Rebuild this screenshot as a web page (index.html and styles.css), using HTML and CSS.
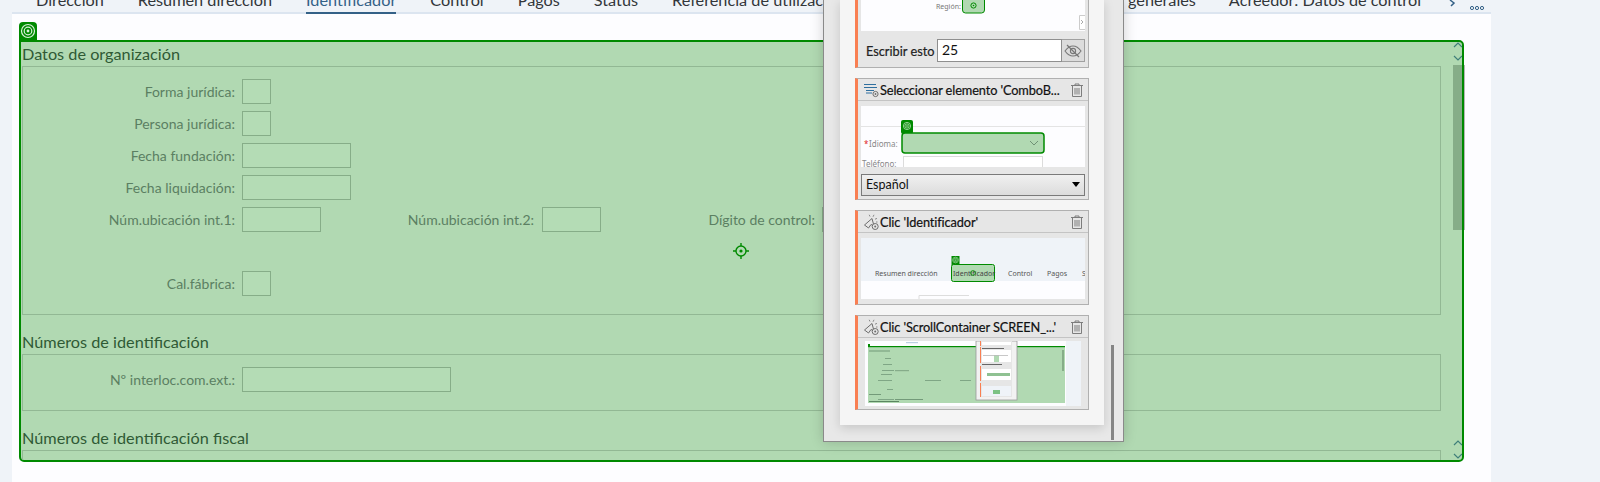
FILE: index.html
```html
<!DOCTYPE html>
<html lang="es">
<head>
	<meta charset="UTF-8">
	<title>Identificador</title>
	<link rel="stylesheet" href="styles.css">
</head>
<body>
	<svg class="defs" width="0" height="0">
		<symbol id="target-ring" viewBox="0 0 18 18">
			<circle cx="9" cy="9" r="6.5" fill="none" stroke="#d9f0d9" stroke-width="1.2"/>
			<circle cx="9" cy="9" r="3.8" fill="none" stroke="#d9f0d9" stroke-width="1.2"/>
			<circle cx="9" cy="9" r="1.4" fill="#d9f0d9"/>
		</symbol>
		<symbol id="trash" viewBox="0 0 14 14">
			<path d="M1 2.5h12M5 2.5V1h4v1.5M2.5 2.5v11h9v-11M5 5v6.5M7 5v6.5M9 5v6.5" fill="none" stroke="#7d7d7d" stroke-width="1"/>
		</symbol>
		<symbol id="click" viewBox="0 0 16 16">
			<path d="M1.5 11 9 4.5l2 7.5-3-1.5-2.5 3.5z" fill="none" stroke="#6d6d6d" stroke-width="1"/>
			<path d="M7 2.5 6.2.8M10 2.8 11 .8M12 5.2l2-.8M13 8h1.5" stroke="#8a8a8a" stroke-width="1"/>
			<circle cx="12.2" cy="12.5" r="3" fill="#e6e6e6" stroke="#6d6d6d"/>
			<circle cx="12.2" cy="12.5" r="1" fill="#6d6d6d"/>
		</symbol>
	</svg>

	<div class="panel">
		<div class="tabs">
			<span class="tab">Dirección</span>
			<span class="tab">Resumen dirección</span>
			<span class="tab active">Identificador</span>
			<span class="tab">Control</span>
			<span class="tab">Pagos</span>
			<span class="tab">Status</span>
			<span class="tab">Referencia de utilización</span>
			<div class="tabs-end">
				<span class="tab">Datos generales</span>
				<span class="tab">Acreedor: Datos de control</span>
				<svg class="tab-more" width="48" height="12" viewBox="0 0 48 12">
					<path d="M7 0 11 3 8 6" fill="none" stroke="#346187" stroke-width="1.5"/>
					<circle cx="29" cy="8" r="1.6" fill="none" stroke="#346187"/>
					<circle cx="34" cy="8" r="1.6" fill="none" stroke="#346187"/>
					<circle cx="39" cy="8" r="1.6" fill="none" stroke="#346187"/>
				</svg>
			</div>
		</div>

		<div class="tag"><svg width="18" height="18"><use href="#target-ring"/></svg></div>
		<div class="scroll-area">
			<h3 class="group-title first">Datos de organización</h3>
			<div class="group group-org">
				<div class="row"><label>Forma jurídica:</label><span class="inp w-s"></span></div>
				<div class="row"><label>Persona jurídica:</label><span class="inp w-s"></span></div>
				<div class="row"><label>Fecha fundación:</label><span class="inp w-m"></span></div>
				<div class="row"><label>Fecha liquidación:</label><span class="inp w-m"></span></div>
				<div class="row">
					<label>Núm.ubicación int.1:</label><span class="inp w-u1"></span>
					<label class="lbl-2">Núm.ubicación int.2:</label><span class="inp w-u2"></span>
					<label class="lbl-3">Dígito de control:</label><span class="inp w-u2"></span>
				</div>
				<div class="row row-cal"><label>Cal.fábrica:</label><span class="inp w-s"></span></div>
			</div>
			<h3 class="group-title">Números de identificación</h3>
			<div class="group group-num">
				<div class="row"><label>Nº interloc.com.ext.:</label><span class="inp w-l"></span></div>
			</div>
			<h3 class="group-title">Números de identificación fiscal</h3>
			<div class="group group-fiscal"></div>

			<svg class="crosshair" width="16" height="16" viewBox="0 0 16 16">
				<circle cx="8" cy="8" r="5" fill="none" stroke="#008a00" stroke-width="1.4"/>
				<circle cx="8" cy="8" r="1.6" fill="#008a00"/>
				<path d="M8 0v3M8 13v3M0 8h3M13 8h3" stroke="#008a00" stroke-width="1.4"/>
			</svg>

			<div class="sb">
				<svg class="sb-arrows top" width="12" height="22" viewBox="0 0 12 22">
					<path d="M2 6 6 2l4 4M2 15l4 4 4-4" fill="none" stroke="#3f7f7a" stroke-width="1.2"/>
				</svg>
				<div class="sb-thumb"></div>
				<svg class="sb-arrows bottom" width="12" height="22" viewBox="0 0 12 22">
					<path d="M2 6 6 2l4 4M2 15l4 4 4-4" fill="none" stroke="#3f7f7a" stroke-width="1.2"/>
				</svg>
			</div>
		</div>
	</div>
	<div class="sb-edge"></div>

	<div class="popup">
		<div class="popup-list">
			<div class="card">
				<svg class="shot" width="224" height="41" viewBox="0 -10 224 41">
					<rect x="0" y="-10" width="224" height="41" fill="#fdfdff"/>
					<text class="mini mini-s" x="75" y="8.500" fill="#777">Región:</text>
					<rect x="101.5" y="-10" width="22" height="23" rx="3" fill="#b1d9b2" stroke="#008a00"/>
					<circle cx="112.5" cy="5.5" r="2.6" fill="none" stroke="#008a00"/>
					<circle cx="112.5" cy="5.5" r=".8" fill="#008a00"/>
					<path d="M224 15.5h-5.5v14h5.500" fill="#fff" stroke="#ccc"/>
					<path d="M220 20l2 2-2 2" fill="none" stroke="#aaa"/>
				</svg>
				<div class="write-row">
					<span class="write-label">Escribir esto</span>
					<span class="write-input">25</span>
					<span class="write-eye">
						<svg width="18" height="14" viewBox="0 0 18 14">
							<path d="M1 7c2.500-3.500 5-5 8-5s5.500 1.500 8 5c-2.500 3.500-5 5-8 5s-5.500-1.500-8-5z" fill="none" stroke="#777" stroke-width="1.1"/>
							<circle cx="9" cy="7" r="2.600" fill="none" stroke="#777" stroke-width="1.100"/>
							<path d="M3 1l12 12" stroke="#777" stroke-width="1.200"/>
						</svg>
					</span>
				</div>
			</div>

			<div class="card card-combo">
				<div class="card-head">
					<svg class="card-icon" width="16" height="16" viewBox="0 0 16 16">
						<path d="M1 2.500h12M1 5.500h13M3 8.500h8M3 11h6" stroke="#2f6f9f" stroke-width="1.200"/>
						<circle cx="12.500" cy="12" r="2.600" fill="#e6e6e6" stroke="#6d6d6d"/>
						<circle cx="12.500" cy="12" r=".9" fill="#6d6d6d"/>
					</svg>
					<span class="card-title">Seleccionar elemento 'ComboB...</span>
					<svg class="card-trash" width="14" height="14"><use href="#trash"/></svg>
				</div>
				<svg class="shot" width="224" height="61" viewBox="0 0 224 61">
					<rect width="224" height="61" fill="#fdfdff"/>
					<path d="M0 20.500h224" stroke="#e4e4e4"/>
					<rect x="42.500" y="50.500" width="139" height="14" fill="#fff" stroke="#dcdcdc"/>
					<rect x="40" y="14" width="12" height="14" rx="2" fill="#008a00"/>
					<use href="#target-ring" x="41" y="15" width="10" height="10"/>
					<rect x="41" y="27" width="142" height="20" rx="3" fill="#b1d9b2" stroke="#008a00" stroke-width="1.500"/>
					<path d="M169 35l4 4 4-4" fill="none" stroke="#6f9275"/>
					<text class="mini" x="3" y="41" fill="#d22">*</text>
					<text class="mini" x="8" y="41" fill="#888">Idioma:</text>
					<text class="mini" x="1" y="61" fill="#888">Teléfono:</text>
				</svg>
				<div class="combo">Español</div>
			</div>

			<div class="card">
				<div class="card-head">
					<svg class="card-icon" width="16" height="16"><use href="#click"/></svg>
					<span class="card-title">Clic 'Identificador'</span>
					<svg class="card-trash" width="14" height="14"><use href="#trash"/></svg>
				</div>
				<svg class="shot" width="224" height="61" viewBox="0 0 224 61">
					<rect width="224" height="61" fill="#fdfdff"/>
					<rect width="224" height="43" fill="#eff3f8"/>
					<text class="mini mini-s" x="14" y="38" fill="#555">Resumen dirección</text>
					<rect x="90.500" y="18" width="8" height="9" fill="#008a00"/>
					<use href="#target-ring" x="90.500" y="18" width="8" height="8"/>
					<rect x="90.500" y="26.500" width="43" height="17" rx="2" fill="#b1d9b2" stroke="#008a00"/>
					<text class="mini mini-s" x="92" y="38" fill="#444">Identificador</text>
					<circle cx="112" cy="35" r="2.400" fill="none" stroke="#008a00" stroke-width=".8"/>
					<text class="mini mini-s" x="147" y="38" fill="#555">Control</text>
					<text class="mini mini-s" x="186" y="38" fill="#555">Pagos</text>
					<text class="mini mini-s" x="221" y="38" fill="#555">S</text>
					<path d="M58 61v-3.500h50" fill="none" stroke="#ddd"/>
				</svg>
			</div>

			<div class="card">
				<div class="card-head">
					<svg class="card-icon" width="16" height="16"><use href="#click"/></svg>
					<span class="card-title">Clic 'ScrollContainer SCREEN_...'</span>
					<svg class="card-trash" width="14" height="14"><use href="#trash"/></svg>
				</div>
				<svg class="shot shot-inset" width="216" height="65" viewBox="0 0 216 65">
					<rect width="201" height="65" fill="#fdfdff"/>
					<rect x="201" width="15" height="65" fill="#eff3f8"/>
					<rect x="41" y="1" width="12" height="1.200" fill="#bcd0e2"/>
					<rect x="3" y="5" width="197" height="57" fill="#b1d9b2"/>
					<rect x="3" y="5" width="197" height="1.200" fill="#008a00"/>
					<rect x="3" y="3" width="2" height="2" fill="#008a00"/>
					<g fill="#5f8567" opacity=".75">
						<rect x="4" y="9.500" width="21" height="1"/>
						<rect x="20" y="17" width="6" height=".8"/>
						<rect x="18" y="23" width="9" height=".8"/>
						<rect x="17" y="29" width="12" height=".8"/>
						<rect x="16" y="33" width="11" height=".8"/>
						<rect x="13" y="39" width="14" height=".8"/>
						<rect x="60" y="39" width="16" height=".8"/>
						<rect x="95" y="39" width="11" height=".8"/>
						<rect x="30" y="29" width="14" height="1.200" opacity=".7"/>
						<rect x="22" y="48" width="6" height=".8"/>
						<rect x="4" y="53" width="12" height="1"/>
						<rect x="13" y="58" width="16" height=".8"/>
						<rect x="30" y="58" width="28" height="1"/>
					</g>
					<rect x="4" y="60" width="30" height="1" fill="#3f6a46" opacity=".75"/>
					<rect x="197" y="9" width="2" height="21" fill="#86ad88"/>
					<rect x="111" width="41" height="59" fill="#f2f2f2" stroke="#9a9a9a" stroke-width=".8"/>
					<rect x="115" width="32" height="56" fill="#e6e6e6"/>
					<rect x="115" width="1" height="5" fill="#f97f52"/>
					<rect x="115" y="6" width="1" height="16" fill="#f97f52"/>
					<rect x="115" y="25" width="1" height="15" fill="#f97f52"/>
					<rect x="115" y="42" width="1" height="14" fill="#f97f52"/>
					<rect x="117" y="1" width="29" height="3" fill="#fff"/>
					<rect x="117" y="9" width="29" height="12" fill="#fff"/>
					<rect x="117" y="28" width="29" height="11" fill="#fff"/>
					<rect x="117" y="45" width="29" height="10" fill="#eff3f8"/>
					<rect x="129" y="14" width="5" height="7" fill="#b1d9b2"/>
					<rect x="118" y="14" width="25" height=".8" fill="#bbb"/>
					<rect x="122" y="32" width="23" height="3" fill="#8fc192"/>
					<rect x="128" y="49" width="7" height="4" fill="#7cc283"/>
					<rect x="117" y="23" width="20" height="1" fill="#666"/>
					<rect x="117" y="7" width="22" height="1" fill="#666"/>
				</svg>
			</div>
		</div>
		<div class="popup-sb"></div>
	</div>
</body>
</html>
```

FILE: styles.css
```css
* {
	box-sizing: border-box;
}

html, body {
	margin: 0;
	height: 482px;
	overflow: hidden;
}

body {
	background: #eff3f8;
	font-family: Lato, sans-serif;
	position: relative;
}

.defs {
	position: absolute;
}

.panel {
	margin-left: 12px;
	width: 1479px;
	height: 482px;
	background: #fdfdff;
}

/* tab strip, cut off by the top of the window */
.tabs {
	display: flex;
	align-items: flex-end;
	height: 14px;
	padding-left: 24px;
	gap: 34px;
	background: #eff3f8;
	border-bottom: 2px solid #dce5f0;
	white-space: nowrap;
	font-size: 16.25px;
	color: #32363a;
}

.tab {
	display: block;
	height: 12px;
	line-height: 0;
}

.active {
	color: #346187;
	box-shadow: 0 2px 0 #346187;
}

.tabs-end {
	display: flex;
	gap: 33px;
	margin-left: auto;
	align-items: flex-end;
}

.tab-more {
	margin-left: -11px;
}

.tag {
	width: 18px;
	height: 18px;
	margin: 8px 0 0 7px;
	background: #008a00;
	border-radius: 4px 4px 0 0;
}

.scroll-area {
	position: relative;
	width: 1445px;
	height: 422px;
	margin-left: 7px;
	border: 2px solid #008a00;
	border-radius: 0 5px 5px 5px;
	background: #b1d9b2;
	overflow: hidden;
	padding-left: 1px;
}

.group-title {
	margin: 0;
	height: 39px;
	padding-top: 17px;
	font-size: 16.25px;
	line-height: 20px;
	font-weight: 400;
	color: #2f5a35;
}

.group-title.first {
	height: 24px;
	padding-top: 2px;
}

.group {
	width: 1419px;
	border: 1px solid #92b894;
	padding-top: 12px;
}

.group-org {
	height: 249px;
}

.group-num {
	height: 57px;
}

.group-fiscal {
	height: 40px;
}

.row {
	display: flex;
	align-items: center;
	height: 25px;
	margin-bottom: 7px;
	font-size: 14px;
	color: #5b7f62;
}

.row-cal {
	margin-top: 39px;
}

.row label {
	width: 212px;
	margin-right: 7px;
	text-align: right;
	white-space: nowrap;
}

.row .lbl-2 {
	width: 213px;
	margin-right: 8px;
}

.row .lbl-3 {
	width: 214px;
}

.inp {
	display: block;
	height: 25px;
	border: 1px solid #86ad88;
	background: #b4dcb5;
	flex-shrink: 0;
}

.w-s {
	width: 29px;
}

.w-m {
	width: 109px;
}

.w-u1 {
	width: 79px;
}

.w-u2 {
	width: 59px;
}

.w-l {
	width: 209px;
}

.crosshair {
	position: absolute;
	left: 712px;
	top: 201px;
}

.sb {
	position: absolute;
	top: 0;
	right: 0;
	width: 9px;
	height: 418px;
	display: flex;
	flex-direction: column;
}

.sb-arrows {
	flex-shrink: 0;
	margin-left: -1px;
}

.sb-arrows.top {
	margin-top: -1px;
}

.sb-arrows.bottom {
	position: absolute;
	bottom: -1px;
}

.sb-thumb {
	height: 165px;
	margin-top: 2px;
	background: #86ad88;
}

/* thumb sticks out past the green frame */
.sb-edge {
	position: absolute;
	left: 1464px;
	top: 65px;
	width: 1px;
	height: 165px;
	background: #b5b5b5;
}

/* floating recorder window */
.popup {
	position: absolute;
	left: 823px;
	top: 0;
	width: 301px;
	height: 442px;
	background: #e8e8e8;
	border: 1px solid #8a8a8a;
	border-top: 0;
	box-shadow: 0 0 12px rgba(0, 0, 0, .18);
	overflow: hidden;
}

.popup-list {
	display: flex;
	flex-direction: column;
	justify-content: flex-end;
	gap: 10px;
	width: 264px;
	height: 425px;
	margin-left: 16px;
	padding: 0 0 15px 15px;
	background: #f5f5f5;
	box-shadow: 0 3px 10px rgba(0, 0, 0, .15);
	overflow: hidden;
}

.card {
	flex-shrink: 0;
	width: 234px;
	background: #e6e6e6;
	border: 1px solid #b0b0b0;
	border-left: 3px solid #f97f52;
	padding-bottom: 5px;
}

.card-head {
	display: flex;
	align-items: center;
	height: 22px;
	padding: 0 4px 0 5px;
	border-bottom: 1px solid #c4c4c4;
	margin-bottom: 5px;
}

.card-icon {
	flex-shrink: 0;
}

.card-title {
	flex: 1;
	margin-left: 1px;
	font-size: 12.75px;
	letter-spacing: -.1px;
	color: #111;
	-webkit-text-stroke: .2px #111;
	white-space: nowrap;
	overflow: hidden;
}

.card-trash {
	flex-shrink: 0;
}

.shot {
	display: block;
	margin-left: 3px;
}

.shot-inset {
	margin: -2px 0 -2px 7px;
}

.mini {
	font-family: "Noto Sans", sans-serif;
	font-size: 8px;
}

.mini-s {
	font-size: 7px;
}

.write-row {
	display: flex;
	align-items: center;
	height: 23px;
	margin: 8px 0 0 3px;
	padding-left: 5px;
}

.write-label {
	width: 71px;
	font-size: 12.75px;
	color: #222;
	-webkit-text-stroke: .2px #222;
	white-space: nowrap;
}

.write-input {
	width: 125px;
	height: 23px;
	padding-left: 4px;
	border: 1px solid #8f8f8f;
	background: #fff;
	font-size: 14px;
	line-height: 19px;
	color: #111;
}

.write-eye {
	display: flex;
	align-items: center;
	justify-content: center;
	width: 23px;
	height: 23px;
	border: 1px solid #a0a0a0;
	border-left: 0;
	background: #dcdcdc;
}

.combo {
	position: relative;
	height: 22px;
	margin: 7px 0 -2px 3px;
	width: 224px;
	padding-left: 4px;
	border: 1px solid #7a7a7a;
	background: linear-gradient(#f0f0f0, #dcdcdc);
	font-size: 12.5px;
	line-height: 20px;
	color: #111;
}

.combo::after {
	content: "";
	position: absolute;
	right: 4px;
	top: 7px;
	border: 4px solid transparent;
	border-top: 5px solid #000;
	border-bottom: 0;
}

.popup-sb {
	position: absolute;
	left: 287px;
	top: 345px;
	width: 3px;
	height: 95px;
	background: #858585;
}
```
